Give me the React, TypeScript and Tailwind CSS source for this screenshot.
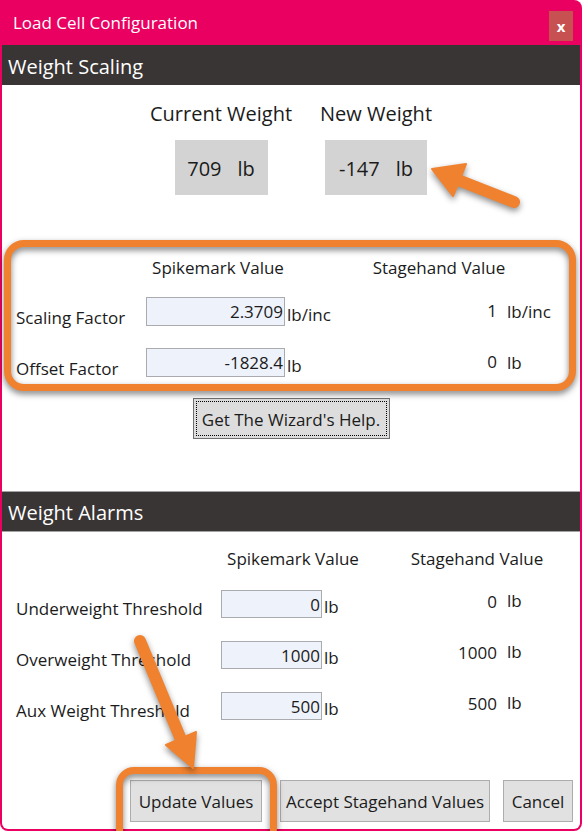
import React from "react";

const ORANGE = "#f0822f";

function Field({ value, w, h }: { value: string; w: string; h: string }) {
  return (
    <div className={`${w} ${h} shrink-0 bg-[#eef2fb] border border-[#a9abae] text-right pr-[1px] text-[17px] leading-[28px]`}>
      {value}
    </div>
  );
}

function ScaleRow({ label, value, unit, stage, gap }: { label: string; value: string; unit: string; stage: string; gap: string }) {
  return (
    <div className={`flex items-start h-[29px] ${gap}`}>
      <div className="w-[130px] pt-[9px] leading-[24px]">{label}</div>
      <Field value={value} w="w-[139px]" h="h-[29px]" />
      <div className="w-[112px] pl-[2px] pt-[6px] leading-[24px]">{unit}</div>
      <div className="w-[100px] text-right pt-[2px] leading-[24px]">{stage}</div>
      <div className="pl-[10px] pt-[3px] leading-[24px]">{unit}</div>
    </div>
  );
}

function AlarmRow({ label, value, stage, gap }: { label: string; value: string; stage: string; gap: string }) {
  return (
    <div className={`flex items-start h-[28px] ${gap}`}>
      <div className="w-[205px] pt-[7px] leading-[24px]">{label}</div>
      <Field value={value} w="w-[101px]" h="h-[28px]" />
      <div className="w-[75px] pl-[2px] pt-[5px] leading-[24px]">lb</div>
      <div className="w-[100px] text-right pt-0 leading-[24px]">{stage}</div>
      <div className="pl-[10px] -mt-[1px] leading-[24px]">lb</div>
    </div>
  );
}

function Header({ title, lines }: { title: string; lines?: boolean }) {
  return (
    <div
      className={`shrink-0 bg-[#393534] text-white text-[20px] pl-[6px] pt-[3px] flex items-center ${
        lines ? "h-[41px] border-y border-[#a3a3a3]" : "h-[40px]"
      }`}
    >
      {title}
    </div>
  );
}

export default function App() {
  return (
    <div className="relative w-[582px] h-[831px] bg-[#ea0060] rounded-tr-[8px] rounded-b-[8px] overflow-hidden flex flex-col font-['Open_Sans',sans-serif] text-[#1b1b1b]">
      {/* title bar */}
      <div className="h-[45px] shrink-0 flex items-start justify-between pl-[13px] pr-[9px]">
        <span className="text-white text-[17px] leading-[24px] mt-[11px]">Load Cell Configuration</span>
        <div className="w-[24px] h-[30px] mt-[11px] bg-[#c75050] text-white font-bold text-[15px] flex items-center justify-center">
          x
        </div>
      </div>

      <div className="flex-1 mx-[2px] mb-[2px] bg-white rounded-b-[6px] flex flex-col text-[17px]">
        <Header title="Weight Scaling" />

        <div className="h-[406px] shrink-0 flex flex-col">
          <div className="flex pl-[148px] gap-[28px] pt-[16px]">
            <div className="flex flex-col items-center">
              <span className="text-[20px] leading-[26px]">Current Weight</span>
              <div className="mt-[13px] w-[93px] h-[55px] bg-[#d3d3d3] flex items-center justify-center gap-[16px] text-[20px] pt-[2px]">
                <span>709</span>
                <span>lb</span>
              </div>
            </div>
            <div className="flex flex-col items-center">
              <span className="text-[20px] leading-[26px]">New Weight</span>
              <div className="mt-[13px] w-[102px] h-[55px] bg-[#d3d3d3] flex items-center justify-center gap-[16px] text-[20px] pt-[2px]">
                <span>-147</span>
                <span>lb</span>
              </div>
            </div>
          </div>

          <div className="flex mt-[61px] leading-[24px]">
            <div className="w-[146px]" />
            <div className="w-[140px] text-center">Spikemark Value</div>
            <div className="w-[71px]" />
            <div className="w-[160px] text-center">Stagehand Value</div>
          </div>

          <div className="pl-[14px]">
            <ScaleRow label="Scaling Factor" value="2.3709" unit="lb/inc" stage="1" gap="mt-[17px]" />
            <ScaleRow label="Offset Factor" value="-1828.4" unit="lb" stage="0" gap="mt-[22px]" />
          </div>

          <div className="flex justify-center mt-[21px]">
            <button className="w-[197px] h-[41px] bg-[#dddddd] border border-[#707070] outline-1 outline-dotted outline-black outline-offset-[-4px] text-[17px] text-[#1b1b1b] pt-[2px]">
              Get The Wizard's Help.
            </button>
          </div>
        </div>

        <Header title="Weight Alarms" lines />

        <div className="flex-1 flex flex-col">
          <div className="flex mt-[15px] leading-[24px]">
            <div className="w-[219px]" />
            <div className="w-[144px] text-center">Spikemark Value</div>
            <div className="w-[32px]" />
            <div className="w-[160px] text-center">Stagehand Value</div>
          </div>

          <div className="pl-[14px]">
            <AlarmRow label="Underweight Threshold" value="0" stage="0" gap="mt-[19px]" />
            <AlarmRow label="Overweight Threshold" value="1000" stage="1000" gap="mt-[23px]" />
            <AlarmRow label="Aux Weight Threshold" value="500" stage="500" gap="mt-[23px]" />
          </div>

          <div className="flex justify-end pr-[7px] mt-[60px]">
            <button className="w-[132px] h-[42px] bg-[#e1e1e1] border border-[#adadad] text-[17px] pt-[2px]">Update Values</button>
            <button className="ml-[18px] w-[210px] h-[42px] bg-[#e1e1e1] border border-[#adadad] text-[17px] pt-[2px]">
              Accept Stagehand Values
            </button>
            <button className="ml-[13px] w-[70px] h-[42px] bg-[#e1e1e1] border border-[#adadad] text-[17px] pt-[2px]">Cancel</button>
          </div>
        </div>
      </div>

      {/* annotations */}
      <div className="absolute left-[4px] top-[240px] w-[572px] h-[151px] border-[7px] border-[#f0822f] rounded-[20px] drop-shadow-[0_3px_3px_rgba(0,0,0,0.5)] pointer-events-none" />
      <div className="absolute left-[116px] top-[767px] w-[161px] h-[80px] border-[7px] border-[#f0822f] rounded-[18px] drop-shadow-[0_3px_3px_rgba(0,0,0,0.5)] pointer-events-none" />
      <svg className="absolute inset-0 pointer-events-none" width="582" height="831" viewBox="0 0 582 831">
        <g fill={ORANGE} stroke={ORANGE} style={{ filter: "drop-shadow(0 3px 3px rgba(0,0,0,0.45))" }}>
          <line x1="514" y1="202" x2="458" y2="180" strokeWidth="12" strokeLinecap="round" />
          <polygon points="432,169 466,164 453,196" strokeWidth="2" strokeLinejoin="round" />
          <line x1="140" y1="641" x2="182" y2="742" strokeWidth="12" strokeLinecap="round" />
          <polygon points="193,768 196,732 166,745" strokeWidth="2" strokeLinejoin="round" />
        </g>
      </svg>
    </div>
  );
}
